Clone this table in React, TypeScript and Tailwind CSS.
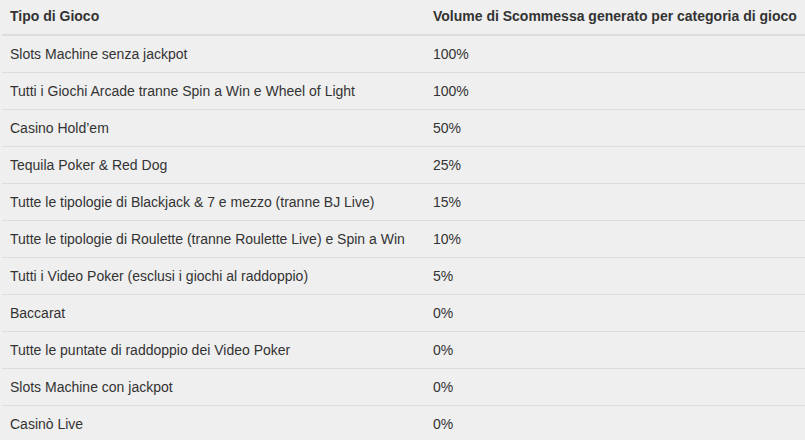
const rows: [string, string][] = [
  ["Slots Machine senza jackpot", "100%"],
  ["Tutti i Giochi Arcade tranne Spin a Win e Wheel of Light", "100%"],
  ["Casino Hold’em", "50%"],
  ["Tequila Poker & Red Dog", "25%"],
  ["Tutte le tipologie di Blackjack & 7 e mezzo (tranne BJ Live)", "15%"],
  ["Tutte le tipologie di Roulette (tranne Roulette Live) e Spin a Win", "10%"],
  ["Tutti i Video Poker (esclusi i giochi al raddoppio)", "5%"],
  ["Baccarat", "0%"],
  ["Tutte le puntate di raddoppio dei Video Poker", "0%"],
  ["Slots Machine con jackpot", "0%"],
  ["Casinò Live", "0%"],
];

export default function App() {
  return (
    <div className="h-[440px] w-[805px] overflow-hidden bg-[#efefef] pl-[2px] font-['Liberation_Sans',Arial,sans-serif] text-[14px] leading-5 text-[#333]">
      <table className="w-[810px] -mt-[2px] border-collapse">
        <thead>
          <tr>
            <th className="w-[423px] border-b-2 border-[#dddddd] px-2 py-2 text-left font-bold">Tipo di Gioco</th>
            <th className="border-b-2 border-[#dddddd] px-2 py-2 text-left font-bold">
              Volume di Scommessa generato per categoria di gioco
            </th>
          </tr>
        </thead>
        <tbody>
          {rows.map(([name, pct], i) => (
            <tr key={name}>
              <td className={`px-2 py-2 ${i > 0 ? "border-t border-[#dddddd]" : ""}`}>{name}</td>
              <td className={`px-2 py-2 ${i > 0 ? "border-t border-[#dddddd]" : ""}`}>{pct}</td>
            </tr>
          ))}
        </tbody>
      </table>
    </div>
  );
}
